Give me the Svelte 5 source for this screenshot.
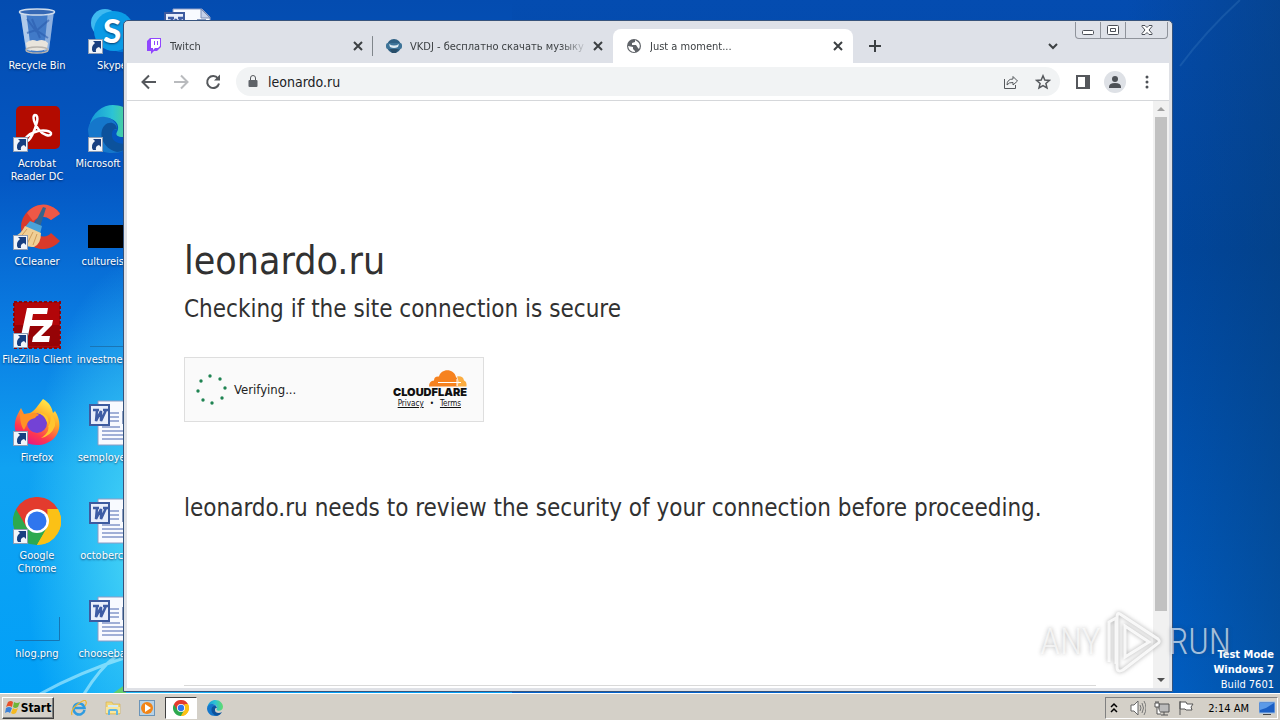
<script lang="ts">
	type Shortcut = { name: string; icon: string; link?: boolean };

	const columns: Shortcut[][] = [
		[
			{ name: 'Recycle Bin', icon: 'bin' },
			{ name: 'Acrobat Reader DC', icon: 'acrobat', link: true },
			{ name: 'CCleaner', icon: 'ccleaner', link: true },
			{ name: 'FileZilla Client', icon: 'filezilla', link: true },
			{ name: 'Firefox', icon: 'firefox', link: true },
			{ name: 'Google Chrome', icon: 'chrome', link: true },
			{ name: 'hlog.png', icon: 'blank' }
		],
		[
			{ name: 'Skype', icon: 'skype', link: true },
			{ name: 'Microsoft Edge', icon: 'edge', link: true },
			{ name: 'cultureis.jpg', icon: 'black' },
			{ name: 'investmen.jpg', icon: 'line' },
			{ name: 'semployee.rtf', icon: 'word' },
			{ name: 'octoberco.rtf', icon: 'word' },
			{ name: 'choosebas.rtf', icon: 'word' }
		],
		[{ name: '', icon: 'word' }]
	];

	const tabs = [
		{ title: 'Twitch', icon: 'twitch' },
		{ title: 'VKDJ - бесплатно скачать музыку', icon: 'vkdj' },
		{ title: 'Just a moment...', icon: 'globe' }
	];

	const dots = [
		[15, 1],
		[25, 4],
		[30, 13],
		[27, 23],
		[17, 28],
		[8, 25],
		[3, 16],
		[6, 6]
	];

	let active = $state(2);
	let address = $state('leonardo.ru');
</script>

{#snippet glyph(name: string)}
	{#if name === 'bin'}
		<svg viewBox="0 0 48 48">
			<path d="M7 4h34l-5 39q-12 5-23 0z" fill="#7ea6dc" fill-opacity=".5" />
			<path d="M7 4h6l5 40-5-1z" fill="#d6e6f6" fill-opacity=".75" />
			<path d="M35 4h6l-5 39-5 1z" fill="#c2d6f0" fill-opacity=".6" />
			<path d="M14 12l9 12 13-11M14 26l9-3 12 8M19 12l8 19" stroke="#2a5cae" stroke-width="2" fill="none" opacity=".6" />
			<ellipse cx="24" cy="5" rx="17.500" ry="3" fill="#3668b4" stroke="#cfdcec" stroke-width="1.500" />
			<path d="M13 36q5-5 11-2 7-3 11 2l-1 6q-10 4-20 0z" fill="#e9e4dc" />
			<ellipse cx="24" cy="43" rx="11" ry="3" fill="none" stroke="#b9b4ae" stroke-width="1.500" />
		</svg>
	{:else if name === 'acrobat'}
		<svg viewBox="0 0 48 48">
			<rect x="3" y="1" width="44" height="43" rx="5" fill="#b30b00" />
			<path
				d="M22 10c-3 1-1 9 4 15 4 5 11 7 12 4s-8-5-16-2c-7 2-12 8-9 9 4 1 9-11 11-19 1-5 0-7-2-7z"
				fill="none"
				stroke="#fff"
				stroke-width="2.500"
				stroke-linejoin="round"
			/>
		</svg>
	{:else if name === 'ccleaner'}
		<svg viewBox="0 0 48 48">
			<path d="M47 10A22 22 0 1 0 47 38l-9-8a10 10 0 1 1 0-13z" fill="#d93a2b" />
			<path d="M44 7A20 20 0 0 0 14 10l6 8q9-8 18-1l9-6z" fill="#ee5846" />
			<path d="M30 4l3 1-6 19-6-2z" fill="#35658d" />
			<path d="M17 18l12 5-2 8-15-7z" fill="#4aa3d9" />
			<path d="M12 23l16 7q0 11-7 14Q7 45 2 33q6-2 10-10z" fill="#f0cf95" />
			<path d="M14 26L6 36M20 29l-6 12M24 31l-4 11" stroke="#cf9c58" fill="none" />
		</svg>
	{:else if name === 'filezilla'}
		<svg viewBox="0 0 48 48">
			<rect x="1" y="1" width="46" height="46" fill="#b20609" stroke="#8d0508" stroke-width="2" stroke-dasharray="3 2" />
			<path d="M2 24h44v21H2z" fill="#960306" />
			<path d="M14 7h21l-1 6H20l-1 6h10l-1 6H17l-2 10H8zM23 19h17l-1 5-11 11h9l-1 6H19l1-5 11-11h-9z" fill="#fff" />
		</svg>
	{:else if name === 'firefox'}
		<svg viewBox="0 0 48 48">
			<defs>
				<linearGradient id="fox" x1=".8" y1="0" x2=".3" y2="1">
					<stop offset="0" stop-color="#fff44f" />
					<stop offset=".4" stop-color="#ffa726" />
					<stop offset=".75" stop-color="#ff3750" />
					<stop offset="1" stop-color="#e31587" />
				</linearGradient>
			</defs>
			<path d="M30 0c7 4 9 9 10 14l2-2c11 17 0 34-18 34C9 46 0 35 2 24 3 17 6 13 8 9l3 6 6-1c5-2 8-8 13-14z" fill="url(#fox)" />
			<circle cx="24" cy="24" r="10" fill="#7342d6" />
			<path d="M7 14q5 2 10 1 6-3 9 1-3 1-4 3-5 1-7 4-3 6-4 8C8 27 7 21 7 14z" fill="#ff9125" />
			<path d="M24 14q14-1 11 14 5-8 1-15 7 5 6 14-4 10-14 12 11-7 6-16-3-8-10-9z" fill="#ffc52e" />
		</svg>
	{:else if name === 'chrome'}
		<svg viewBox="0 0 48 48">
			<path d="M24 24L3.200 12A24 24 0 0 1 44.800 12z" fill="#e33b2e" />
			<path d="M24 24L44.800 12A24 24 0 0 1 24 48z" fill="#fbc116" />
			<path d="M24 24L3.200 12A24 24 0 0 0 24 48z" fill="#2da94f" />
			<path d="M3.200 12l10.400 18L24 13z" fill="#e33b2e" />
			<path d="M24 48l10.400-18L24 24 13.600 30z" fill="#2da94f" />
			<path d="M24 48l10.400-18V12h10.400A24 24 0 0 1 24 48z" fill="#fbc116" />
			<path d="M3.200 12L13.600 30H24V12z" fill="#e33b2e" />
			<circle cx="24" cy="24" r="12" fill="#fff" />
			<circle cx="24" cy="24" r="9.500" fill="#2f76ee" />
		</svg>
	{:else if name === 'skype'}
		<svg viewBox="0 0 48 48">
			<circle cx="17" cy="16" r="14" fill="#3fb9f0" />
			<circle cx="33" cy="32" r="13" fill="#0078d4" />
			<circle cx="26" cy="24" r="20" fill="#0a9be6" />
			<text x="24" y="36" text-anchor="middle" font-family="Lato, sans-serif" font-weight="900" font-size="33" fill="#fff">S</text>
		</svg>
	{:else if name === 'edge'}
		<svg viewBox="0 0 48 48">
			<defs>
				<linearGradient id="sea" x1="0" x2="1">
					<stop offset="0" stop-color="#1596d8" />
					<stop offset=".5" stop-color="#2cc3d5" />
					<stop offset="1" stop-color="#62dc6a" />
				</linearGradient>
			</defs>
			<path d="M1 22C4 7 15 0 25 0c14 0 23 11 23 20 0 8-6 12-13 12-5 0-8-2-6-5 5-9-7-17-15-13-5 2-10 8-13 8z" fill="url(#sea)" />
			<path d="M0 24c2-9 10-13 17-12 8 1 13 7 12 13-9-4-16 8-5 17 5 5 14 4 20-5-4 8-11 11-20 11C10 48 0 38 0 24z" fill="#1577cb" />
			<path d="M17 20c-8 8-2 24 12 27 6 0 12-4 16-11-9 5-22 3-21-7 0-5 4-6 5-4 0-8-8-9-12-5z" fill="#0c529c" />
		</svg>
	{:else if name === 'word'}
		<svg viewBox="0 0 48 48">
			<path d="M10 2h29l8 8v36H10z" fill="#f8faff" stroke="#8c9cc4" />
			<path d="M38 2v9h9z" fill="#c5d0e8" stroke="#7d8db5" />
			<path d="M22 14h9M22 18h9M14 28h18M14 32h29M14 36h29M14 40h29M22 22h9" stroke="#8297ca" stroke-width="1.500" />
			<path d="M34 12h9v13h-9z" fill="#8a9cc0" />
			<rect x="2" y="6" width="19" height="20" fill="#e8eefb" stroke="#3d5b9f" stroke-width="2" />
			<path d="M5 11h6M9 11l-1 11 5-10 0 10 5-11M15 11h5" fill="none" stroke="#3e5da5" stroke-width="2.500" />
		</svg>
	{:else if name === 'black'}
		<svg viewBox="0 0 48 48"><path d="M0 22h48v23H0z" /></svg>
	{:else if name === 'line'}
		<svg viewBox="0 0 48 48"><path d="M2 45.500h44" stroke="#1975b5" /></svg>
	{:else if name === 'blank'}
		<svg viewBox="0 0 48 48">
			<path d="M2 45.500h44.500V22" fill="none" stroke="#1675b3" />
		</svg>
	{:else if name === 'twitch'}
		<svg viewBox="0 0 16 16">
			<path d="M4 0h11v9l-4 4H8l-3 3v-3H1V3z" fill="#9146ff" />
			<path d="M5 1h9v7l-2 2H9l-2 2v-2H5z" fill="#fff" />
			<path d="M8 3h1v4H8zM11 3h1v4h-1z" fill="#9146ff" />
		</svg>
	{:else if name === 'vkdj'}
		<svg viewBox="0 0 16 16">
			<circle cx="8" cy="8" r="7" fill="#2d5f83" />
			<rect x="0" y="5" width="16" height="6" rx="2" fill="#3d7398" />
			<path d="M3 6q5 3 10 0l-1 3q-4 2-8 0z" fill="#dceaf2" />
			<path d="M4 11h8l-2 4H6z" fill="#294e69" />
		</svg>
	{:else if name === 'globe'}
		<svg viewBox="0 0 16 16">
			<circle cx="8" cy="8" r="7" fill="#5f6368" />
			<path d="M2 8l5 1v2l2 2v1Q3 14 2 8zM9 2v2L6 5v2h4l2 3 1 1q2-4-1-7z" fill="#fff" />
		</svg>
	{/if}
{/snippet}

<div class="desktop">
	<svg class="wallpaper" viewBox="0 0 1280 720" preserveAspectRatio="none" aria-hidden="true">
		<path d="M40 694Q80 672 130 656M84 694Q100 668 116 656" stroke="#b9f1ff" stroke-width="3" fill="none" opacity=".6" />
		<path d="M112 694l14-10v10z" fill="#64cf6b" />
		<path d="M1180 66Q1205 32 1240 0" stroke="#5c9ad0" stroke-width="2" fill="none" opacity=".2" />
	</svg>

	<div class="shortcuts">
		{#each columns as column}
			<div class="column">
				{#each column as item}
					<button class="shortcut">
						<span class="picture">
							{@render glyph(item.icon)}
							{#if item.link}
								<svg class="arrow" viewBox="0 0 15 15">
									<rect x=".5" y=".5" width="14" height="14" fill="#f1f5fa" stroke="#8f9eb5" />
									<path d="M5 2h8v8l-2-2q-4 1-3 5H5Q2 8 7 4z" fill="#173f80" />
								</svg>
							{/if}
						</span>
						<span class="name" class:wide={item.name.length < 16}>{item.name}</span>
					</button>
				{/each}
			</div>
		{/each}
	</div>

	<div class="build">
		<b>Test Mode</b>
		<b>Windows 7</b>
		<span>Build 7601</span>
	</div>

	<section class="window">
		<header class="tabstrip">
			<div class="tabs">
				{#each tabs as tab, i}
					<div class="tab" class:active={i === active}>
						<button class="pick" onclick={() => (active = i)}>
							<span class="favicon">{@render glyph(tab.icon)}</span>
							<span class="title">{tab.title}</span>
						</button>
						<button class="close" aria-label="Close tab">
							<svg viewBox="0 0 16 16"><path d="M4 4l8 8M12 4l-8 8" /></svg>
						</button>
					</div>
				{/each}
			</div>
			<button class="new" aria-label="New tab">
				<svg viewBox="0 0 16 16"><path d="M8 2v12M2 8h12" /></svg>
			</button>
			<button class="search" aria-label="Search tabs">
				<svg viewBox="0 0 16 16"><path d="M4 6l4 4 4-4" /></svg>
			</button>
			<div class="controls">
				<button aria-label="Minimize">
					<svg viewBox="0 0 16 16"><rect x="2.500" y="8.500" width="11" height="4" rx="1" /></svg>
				</button>
				<button aria-label="Restore">
					<svg viewBox="0 0 16 16"><rect x="2.500" y="3.500" width="11" height="9" rx="1" /><path d="M5.500 6.500h5v3h-5z" /></svg>
				</button>
				<button class="exit" aria-label="Close">
					<svg viewBox="0 0 16 16"><path d="M3 3.500h3l2 2 2-2h3v1L10 8l3 3.500v1h-3l-2-2-2 2H3v-1L6 8 3 4.500z" /></svg>
				</button>
			</div>
		</header>

		<div class="toolbar">
			<button aria-label="Back">
				<svg viewBox="0 0 16 16"><path d="M15 8H2M8 1.500L1.500 8 8 14.500" /></svg>
			</button>
			<button class="off" aria-label="Forward">
				<svg viewBox="0 0 16 16"><path d="M1 8h13M8 1.500L14.500 8 8 14.500" /></svg>
			</button>
			<button aria-label="Reload">
				<svg viewBox="0 0 16 16"><path d="M13 4.500A6 6 0 1 0 14 9.500" /><path d="M15 .500v6H9z" fill="#55585c" stroke="none" /></svg>
			</button>
			<div class="omnibox">
				<svg class="lock" viewBox="0 0 16 16">
					<path d="M4.500 6h7q1 0 1 1v5q0 1-1 1h-7q-1 0-1-1V7q0-1 1-1z" fill="#5f6368" stroke="none" />
					<path d="M5.500 6V4a2.500 2.500 0 0 1 5 0v2" />
				</svg>
				<input type="text" aria-label="Address" bind:value={address} />
				<button aria-label="Share">
					<svg class="thin" viewBox="0 0 16 16">
						<path d="M1.500 5v9.500h11V11M4 11q0-6 6-6V2.500L14.500 7 10 11V8.500Q6 8 4 11z" />
					</svg>
				</button>
				<button aria-label="Bookmark">
					<svg class="thin star" viewBox="0 0 16 16">
						<path d="M8 1.800l1.800 4.200 4.600.400-3.500 3 1.100 4.500L8 11.500l-4 2.400 1.100-4.500-3.500-3L6.200 6z" />
					</svg>
				</button>
			</div>
			<button aria-label="Side panel">
				<svg viewBox="0 0 16 16"><path d="M2 2h12v12H2z" /><path d="M10 2h4v12h-4z" fill="#55585c" stroke="none" /></svg>
			</button>
			<button aria-label="Profile">
				<span class="avatar">
					<svg viewBox="0 0 16 16"><circle cx="8" cy="5" r="3" /><path d="M2 13q0-4 6-4t6 4v1H2z" /></svg>
				</span>
			</button>
			<button aria-label="Menu">
				<svg class="solid" viewBox="0 0 16 16"><circle cx="8" cy="3" r="1.500" /><circle cx="8" cy="8" r="1.500" /><circle cx="8" cy="13" r="1.500" /></svg>
			</button>
		</div>

		<div class="view">
			<main>
				<h1>leonardo.ru</h1>
				<h2>Checking if the site connection is secure</h2>
				<div class="widget">
					<svg class="spinner" viewBox="0 0 32 32">
						{#each dots as [x, y]}
							<circle cx={x} cy={y + 1} r="1.700" fill="#1f8352" />
						{/each}
					</svg>
					<span class="status">Verifying...</span>
					<div class="brand">
						<svg class="cloud" viewBox="0 0 38 18">
							<path d="M0 17.500Q0 12 5 11.500 5 7 10 7.500C12-1 25-1 27 8q3 2 1 9.500z" fill="#f6821f" />
							<path d="M28 17.500q3-4 0-10 6-1 7 4 3 1 2.500 6z" fill="#fbad41" />
							<path d="M9 13.500h22" stroke="#fff" />
							<path d="M28 10v7M25 13.500h7" stroke="#fff" />
						</svg>
						<strong>CLOUDFLARE</strong>
						<div class="terms"><a href="#privacy">Privacy</a><span>•</span><a href="#terms">Terms</a></div>
					</div>
				</div>
				<p>leonardo.ru needs to review the security of your connection before proceeding.</p>
				<hr />
			</main>
			<div class="scrollbar">
				<svg viewBox="0 0 16 16"><path d="M4 10l4-4 4 4z" fill="#a0a0a0" /></svg>
				<div class="track"><div class="thumb"></div></div>
				<svg viewBox="0 0 16 16"><path d="M4 6l4 4 4-4z" fill="#505050" /></svg>
			</div>
		</div>
	</section>

	<div class="watermark">
		<span>ANY</span>
		<svg viewBox="0 0 56 64">
			<path d="M3 52V12l7-4v46M14 4l38 25q3 3-1 5L17 60q-6 3-6-3V8q0-6 3-4zM19 16v31l24-15z" />
		</svg>
		<span>RUN</span>
	</div>

	<footer class="taskbar">
		<button class="start">
			<svg viewBox="0 0 16 16">
				<path d="M3 2q3-2 5 0L7 7Q4 5 1 7z" fill="#e8502a" />
				<path d="M9 2q3 2 6 0l-2 5q-3 2-5 0z" fill="#6fb53a" />
				<path d="M1 8q3-2 6 0l-2 5q-2-2-5 0z" fill="#3c82d8" />
				<path d="M8 8q2 2 5 0l-2 5q-3 2-5 0z" fill="#f5b921" />
			</svg>
			Start
		</button>
		<nav>
			<button aria-label="Internet Explorer">
				<svg viewBox="0 0 16 16">
					<path d="M13.500 10A5.500 5.500 0 1 1 13.500 8H4" fill="none" stroke="#2f9be0" stroke-width="2.500" />
					<path d="M1 15Q-1 10 7 4t8-2q1 1-1 4" fill="none" stroke="#efb52d" stroke-width="1.200" />
				</svg>
			</button>
			<button aria-label="Explorer">
				<svg viewBox="0 0 16 16">
					<path d="M1 2h6l1 2h7v10H1z" fill="#f2d77a" stroke="#d0ac4a" stroke-width=".6" />
					<path d="M3 5h10v5H3z" fill="#d5ebf5" />
					<path d="M1 7h14v6H1z" fill="#f9e79d" />
					<path d="M4 15v-4q0-1 1-1h6q1 0 1 1v4" fill="none" stroke="#62b6e0" stroke-width="2" />
				</svg>
			</button>
			<button aria-label="Media Player">
				<svg viewBox="0 0 16 16">
					<rect x=".5" y=".5" width="15" height="15" fill="#b7d2e7" stroke="#6b94b8" />
					<circle cx="8" cy="8" r="6" fill="#f28518" />
					<path d="M6 4l6 4-6 4z" fill="#fff" />
				</svg>
			</button>
			<button class="current" aria-label="Chrome">{@render glyph('chrome')}</button>
			<button aria-label="Edge">{@render glyph('edge')}</button>
		</nav>
		<div class="tray">
			<svg viewBox="0 0 16 16"><path d="M5 7l3-3 3 3M5 12l3-3 3 3" fill="none" stroke="#000" stroke-width="1.500" /></svg>
			<svg viewBox="0 0 16 16">
				<path d="M1 5h3l4-4v14l-4-4H1z" fill="#fff" stroke="#666" />
				<path d="M10 5q2 3 0 6M12 3q3 5 0 10M14 1q4 7 0 14" fill="none" stroke="#777" />
			</svg>
			<svg viewBox="0 0 16 16">
				<path d="M5 4h10v8H5zM7 15h7M10 12v3" fill="#bbb" stroke="#555" />
				<path d="M1 3h4v4H1zM3 7v7h4M2 1v2M4 1v2" fill="#fff" stroke="#555" />
			</svg>
			<svg viewBox="0 0 16 16"><path d="M2 15V1M2 2h6l1 2h6l-2 3 1 3H8L7 9H2z" fill="#fff" stroke="#555" /></svg>
			<time>2:14 AM</time>
			<svg viewBox="0 0 16 16">
				<rect x="0" y="2" width="16" height="11" fill="#1b5fc4" stroke="#9cc0e8" />
				<path d="M1 3h14l-8 5-6 2z" fill="#5b9ae8" />
				<path d="M4 14h8v1H4z" fill="#444" />
			</svg>
		</div>
	</footer>
</div>

<style>
	:global(body) {
		margin: 0;
	}
	.desktop {
		--ui: 'DejaVu Sans Condensed', 'DejaVu Sans', sans-serif;
		position: relative;
		display: flex;
		flex-direction: column;
		justify-content: space-between;
		height: 100vh;
		overflow: hidden;
		font: 11px/13px var(--ui);
		background:
			radial-gradient(ellipse 9% 40% at 11% 76%, #48d6f6, transparent),
			linear-gradient(#044cb0, #0458c4 25%, #0a7ce2 45%, #10a2f2 65%, #00a0f8) left / 40% 100% no-repeat,
			linear-gradient(90deg, transparent 88%, rgb(8 56 100 / 40%)),
			linear-gradient(#044cb0, #0048a4 35%, #0064d0);
	}
	button {
		display: flex;
		align-items: center;
		justify-content: center;
		padding: 0;
		border: 0;
		background: none;
		color: inherit;
		font: inherit;
	}
	svg {
		display: block;
		width: 16px;
		height: 16px;
		flex: none;
	}
	.wallpaper {
		position: absolute;
		inset: 0;
		width: 100%;
		height: 100%;
	}

	.shortcuts {
		position: relative;
		display: flex;
		padding-top: 7px;
	}
	.column {
		width: 75px;
	}
	.shortcut {
		flex-direction: column;
		justify-content: flex-start;
		gap: 4px;
		width: 74px;
		height: 98px;
		color: #fff;
		text-shadow: 0 1px 2px rgb(0 20 60 / 70%);
	}
	.picture {
		position: relative;
	}
	.picture > svg {
		width: 48px;
		height: 48px;
	}
	.picture .arrow {
		position: absolute;
		left: 0;
		bottom: 1px;
		width: 15px;
		height: 15px;
	}
	.wide {
		white-space: nowrap;
	}
	.shortcut:nth-child(6) .wide {
		white-space: normal;
	}
	.build {
		position: absolute;
		right: 6px;
		bottom: 28px;
		display: grid;
		color: #fff;
		line-height: 15px;
		text-align: right;
	}

	.window {
		position: absolute;
		inset: 20px 107px 28px 123px;
		display: flex;
		flex-direction: column;
		box-sizing: border-box;
		padding: 1px 3px 3px;
		border: 1px solid #36537c;
		border-radius: 5px 5px 0 0;
		background: #dfe1e6;
		color: #3c4043;
	}
	.tabstrip {
		display: flex;
		align-items: flex-end;
		height: 41px;
		padding-left: 6px;
		background: #dee1e8;
	}
	.tabs {
		display: flex;
	}
	.tab {
		display: flex;
		align-items: center;
		box-sizing: border-box;
		width: 240px;
		height: 34px;
		padding: 0 7px 0 13px;
		border-radius: 8px 8px 0 0;
	}
	.tab:first-child {
		background: linear-gradient(#80868b, #80868b) right / 1px 20px no-repeat;
	}
	.tab.active {
		background: #fff;
	}
	.pick {
		flex: 1;
		justify-content: flex-start;
		gap: 8px;
		min-width: 0;
	}
	.title {
		flex: 1;
		overflow: hidden;
		margin-right: 2px;
		text-align: left;
		white-space: nowrap;
		mask-image: linear-gradient(90deg, #000 85%, transparent);
	}
	.close,
	.new,
	.search {
		color: #3c4043;
	}
	.close path,
	.new path,
	.search path {
		fill: none;
		stroke: currentColor;
		stroke-width: 2px;
	}
	.new {
		width: 44px;
		height: 34px;
	}
	.search {
		width: 44px;
		height: 34px;
		margin-left: auto;
	}
	.controls {
		display: flex;
		align-self: flex-start;
		height: 16px;
		margin-right: 1px;
		border: 1px solid #8f939b;
		border-top: 0;
		border-radius: 0 0 4px 4px;
	}
	.controls button {
		width: 25px;
		border-right: 1px solid #8f939b;
	}
	.controls .exit {
		width: 41px;
		border: 0;
	}
	.controls path,
	.controls rect {
		fill: #fff;
		stroke: #4b4f57;
	}

	.toolbar {
		display: flex;
		align-items: center;
		height: 37px;
		padding: 0 6px;
		border-bottom: 1px solid #d5d7da;
		background: #fff;
	}
	.toolbar button {
		width: 32px;
		height: 28px;
	}
	.toolbar svg {
		fill: none;
		stroke: #55585c;
		stroke-width: 2px;
	}
	.toolbar .off svg {
		stroke: #b9bbbe;
	}
	.toolbar .thin {
		stroke-width: 1px;
	}
	.toolbar .star {
		stroke-width: 1.5px;
	}
	.toolbar .solid,
	.toolbar .avatar svg {
		fill: #4d5156;
		stroke: none;
	}
	.omnibox {
		flex: 1;
		display: flex;
		align-items: center;
		height: 29px;
		margin: 0 7px;
		padding: 0 1px 0 9px;
		border-radius: 15px;
		background: #f1f3f4;
	}
	.toolbar .lock {
		stroke-width: 1px;
	}
	input {
		flex: 1;
		min-width: 0;
		margin-left: 7px;
		padding: 0;
		border: 0;
		outline: 0;
		background: none;
		color: #202124;
		font: 14px/20px var(--ui);
	}
	.avatar {
		display: grid;
		place-items: center;
		width: 22px;
		height: 22px;
		border-radius: 50%;
		background: #dee1e6;
	}

	.view {
		flex: 1;
		display: flex;
		min-height: 0;
		background: #fff;
	}
	main {
		flex: 1;
		overflow: hidden;
		padding: 130px 57px 0;
		color: #313131;
	}
	h1,
	h2,
	p {
		margin: 0;
		font-weight: 400;
	}
	h1 {
		font-size: 39px;
		line-height: 60px;
	}
	h2,
	p {
		font-size: 24px;
		line-height: 36px;
	}
	.widget {
		display: flex;
		align-items: center;
		box-sizing: border-box;
		width: 300px;
		height: 65px;
		margin: 30px 0 68px;
		padding: 0 16px 0 10px;
		border: 1px solid #dedede;
		background: #fafafa;
		color: #222;
	}
	.spinner {
		width: 32px;
		height: 32px;
	}
	.status {
		margin-left: 7px;
		font-size: 13px;
	}
	.brand {
		display: flex;
		flex-direction: column;
		align-items: flex-end;
		margin-left: auto;
		color: #111;
	}
	.cloud {
		width: 38px;
		height: 18px;
	}
	strong {
		font: 900 11px/10px Inter, sans-serif;
	}
	.terms {
		display: flex;
		gap: 6px;
		padding-right: 6px;
		font-size: 8px;
	}
	a {
		color: inherit;
	}
	hr {
		height: 1px;
		margin: 159px 0 0;
		border: 0;
		background: #d9d9d9;
	}
	.scrollbar {
		display: flex;
		flex-direction: column;
		width: 16px;
		background: #f1f1f1;
	}
	.track {
		flex: 1;
		padding: 0 2px;
	}
	.thumb {
		height: 89%;
		background: #c1c1c1;
	}

	.watermark {
		position: absolute;
		right: 49px;
		bottom: 46px;
		display: flex;
		align-items: center;
		gap: 6px;
		color: rgb(255 255 255 / 65%);
		font: 300 36px/64px 'Roboto Condensed', 'Open Sans Condensed', Lato, sans-serif;
		text-shadow: 0 0 4px rgb(60 60 60 / 40%);
		pointer-events: none;
	}
	.watermark svg {
		width: 56px;
		height: 64px;
		fill: none;
		stroke: rgb(255 255 255 / 85%);
		stroke-width: 3px;
		filter: drop-shadow(0 0 2px rgb(60 60 60 / 50%));
	}

	.taskbar {
		position: relative;
		display: flex;
		align-items: center;
		box-sizing: border-box;
		height: 28px;
		padding: 2px 2px 0;
		border-top: 1px solid #fff;
		background: #d4d0c8;
		color: #000;
	}
	.start {
		width: 52px;
		height: 22px;
		border: 1px solid;
		border-color: #fff #404040 #404040 #fff;
		box-shadow: inset -1px -1px #808080;
		font-size: 12px;
		font-weight: 700;
	}
	nav {
		display: flex;
		gap: 2px;
		margin-left: 9px;
	}
	nav button {
		width: 32px;
		height: 22px;
	}
	nav .current {
		box-sizing: border-box;
		border: 1px solid;
		border-color: #404040 #fff #fff #404040;
		background: #fff;
	}
	.tray {
		display: flex;
		align-items: center;
		gap: 8px;
		height: 20px;
		margin-left: auto;
		padding: 0 2px 0 0;
		border: 1px solid;
		border-color: #808080 #fff #fff #808080;
	}
	time {
		padding: 0 2px 0 6px;
	}
</style>
